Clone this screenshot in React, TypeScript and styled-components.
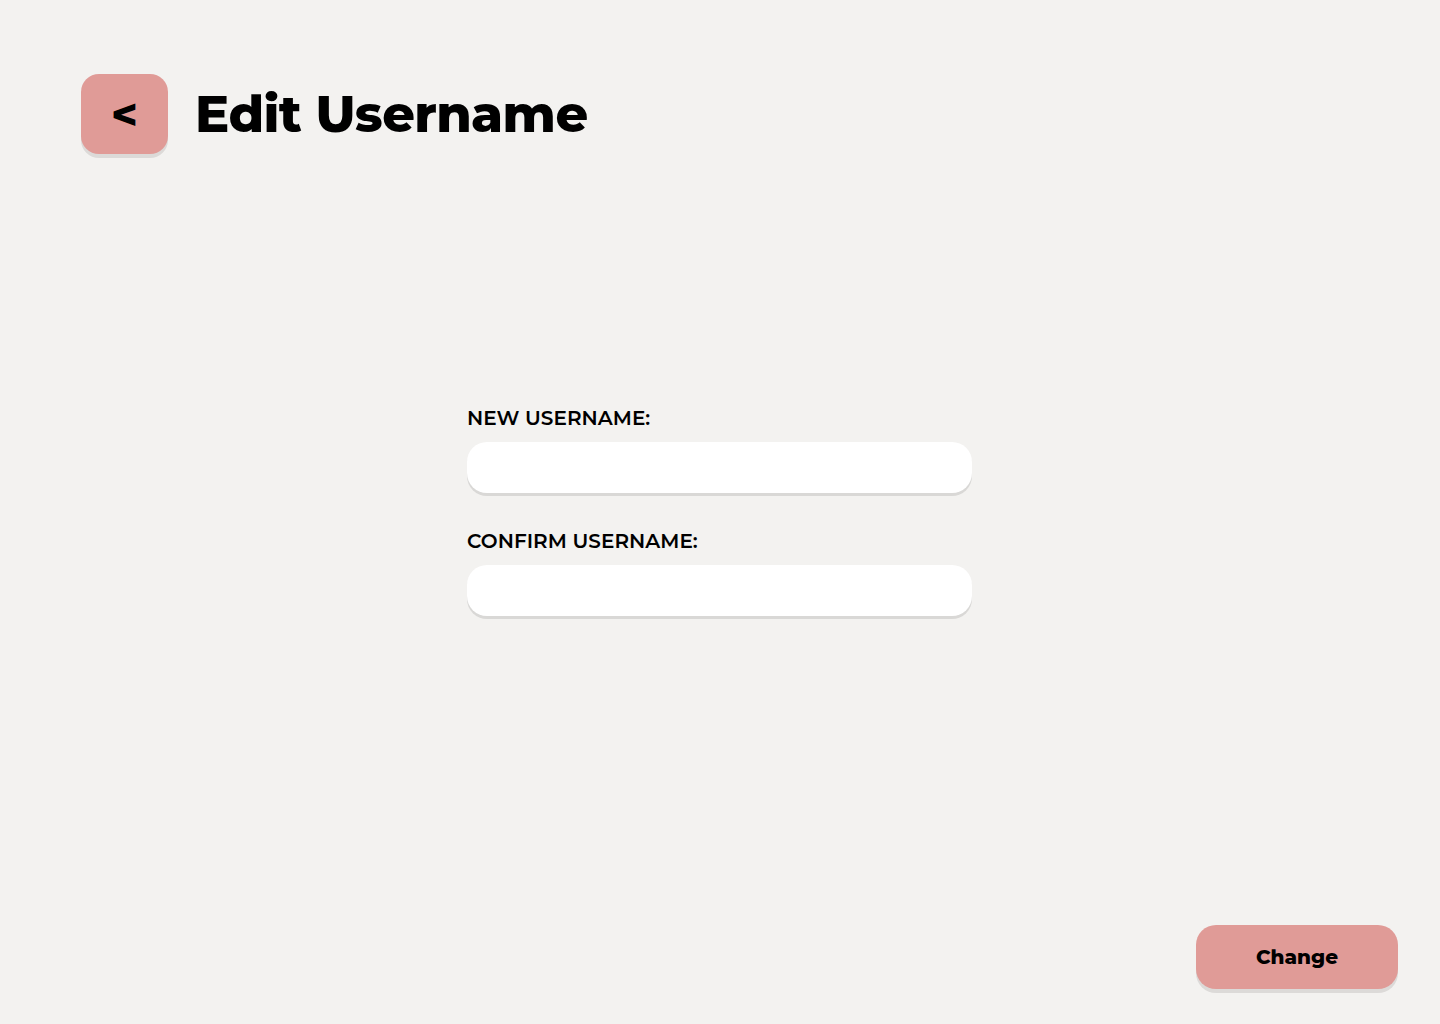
import React from "react";
import styled, { createGlobalStyle } from "styled-components";

const Global = createGlobalStyle`
  html, body { margin: 0; padding: 0; background: #f3f2f0; }
  body { font-family: Montserrat, "DejaVu Sans", sans-serif; color: #000; }
  * { box-sizing: border-box; }
`;

const Page = styled.div`
  width: 1440px;
  height: 1024px;
  display: flex;
  flex-direction: column;
  padding: 74px 42px 35px 81px;
`;

const Header = styled.header`
  display: flex;
  align-items: center;
  gap: 27px;
`;

const BackButton = styled.button`
  width: 87px;
  height: 80px;
  border: none;
  border-radius: 18px;
  background: #e09b97;
  box-shadow: 0 4px 0 #dcdad8;
  display: flex;
  align-items: center;
  justify-content: center;
  font-family: inherit;
  font-size: 44px;
  font-weight: 800;
  color: #000;
  padding: 0;
  cursor: pointer;
`;

const Title = styled.h1`
  margin: 0;
  font-size: 51px;
  font-weight: 800;
  letter-spacing: -0.6px;
`;

const Form = styled.form`
  align-self: flex-start;
  width: 505px;
  margin-top: 252px;
  margin-left: 386px;
  display: flex;
  flex-direction: column;
`;

const Field = styled.div`
  display: flex;
  flex-direction: column;
  gap: 12px;
  margin-bottom: 36px;
`;

const Label = styled.label`
  font-size: 20px;
  font-weight: 600;
  letter-spacing: 0.05px;
  line-height: 24px;
`;

const Input = styled.input`
  width: 505px;
  height: 51px;
  border: none;
  border-radius: 20px;
  background: #fff;
  box-shadow: 0 3px 0 #d9d8d6;
  outline: none;
  padding: 0 20px;
  font-family: inherit;
  font-size: 18px;
`;

const Footer = styled.div`
  margin-top: auto;
  display: flex;
  justify-content: flex-end;
`;

const ChangeButton = styled.button`
  width: 202px;
  height: 64px;
  border: none;
  border-radius: 20px;
  background: #e09b97;
  box-shadow: 0 4px 0 #dcdad8;
  font-family: inherit;
  font-size: 20px;
  font-weight: 800;
  color: #000;
  cursor: pointer;
`;

export default function App() {
  return (
    <>
      <Global />
      <Page>
        <Header>
          <BackButton aria-label="Back">&lt;</BackButton>
          <Title>Edit Username</Title>
        </Header>
        <Form onSubmit={(e) => e.preventDefault()}>
          <Field>
            <Label htmlFor="new">NEW USERNAME:</Label>
            <Input id="new" type="text" />
          </Field>
          <Field>
            <Label htmlFor="confirm">CONFIRM USERNAME:</Label>
            <Input id="confirm" type="text" />
          </Field>
        </Form>
        <Footer>
          <ChangeButton type="button">Change</ChangeButton>
        </Footer>
      </Page>
    </>
  );
}
